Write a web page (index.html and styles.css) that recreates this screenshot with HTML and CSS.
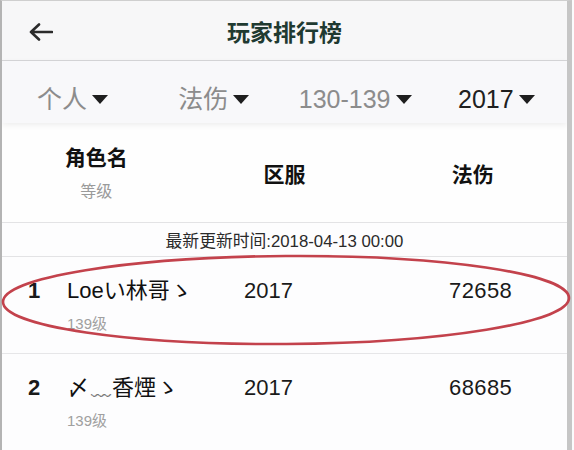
FILE: index.html
```html
<!DOCTYPE html>
<html lang="zh-CN">
<head>
<meta charset="utf-8">
<title>玩家排行榜</title>
<link rel="stylesheet" href="styles.css">
</head>
<body>
<div class="frame">
  <header class="topbar">
    <svg class="back" width="24" height="18" viewBox="0 0 24 18"><path d="M2 9 H23 M10 1.5 L2 9 L10 16.5" fill="none" stroke="#2b2b2b" stroke-width="2.6" stroke-linecap="round" stroke-linejoin="round"/></svg>
    <h1 class="title">玩家排行榜</h1>
  </header>
  <nav class="filters">
    <div class="filter muted">个人<span class="caret"></span></div>
    <div class="filter muted">法伤<span class="caret"></span></div>
    <div class="filter muted">130-139<span class="caret"></span></div>
    <div class="filter active">2017<span class="caret"></span></div>
  </nav>
  <div class="thead">
    <div class="th th-name"><div class="th-main">角色名</div><div class="th-sub">等级</div></div>
    <div class="th"><div class="th-main">区服</div></div>
    <div class="th"><div class="th-main">法伤</div></div>
  </div>
  <div class="updated">最新更新时间:2018-04-13 00:00</div>
  <div class="row">
    <div class="rank">1</div>
    <div class="who"><div class="name">Loeい林哥ゝ</div><div class="level">139级</div></div>
    <div class="server">2017</div>
    <div class="value">72658</div>
  </div>
  <div class="row">
    <div class="rank">2</div>
    <div class="who"><div class="name">〆<span class="wave">﹏</span>香煙ゝ</div><div class="level">139级</div></div>
    <div class="server">2017</div>
    <div class="value">68685</div>
  </div>
</div>
<svg class="mark" width="574" height="450" viewBox="0 0 574 450"><ellipse cx="286" cy="300" rx="283" ry="44" fill="none" stroke="#c3424c" stroke-width="2.6" transform="rotate(-0.4 286 300)"/></svg>
</body>
</html>
```
FILE: styles.css
```css
html, body {
  margin: 0;
  padding: 0;
  background: #fbfbfc;
}
body {
  width: 574px;
  height: 450px;
  overflow: hidden;
  position: relative;
  font-family: "Liberation Sans", "Noto Sans CJK SC", sans-serif;
  color: #1a1a1a;
}
.frame {
  width: 565px;
  height: 449px;
  border-left: 2px solid #b4b4b4;
  border-right: 5px solid #c6c6c6;
  border-top: 1px solid #cfcfcf;
  background: #fdfdfe;
  overflow: hidden;
}
.topbar {
  height: 59px;
  border-bottom: 1px solid #d6d6d8;
  background: #f7f7f8;
  display: flex;
  align-items: center;
  justify-content: center;
  position: relative;
}
.back {
  position: absolute;
  left: 27px;
  top: 22px;
}
.title {
  margin: 0;
  font-size: 23px;
  font-weight: bold;
  color: #1f3a31;
  font-family: "Noto Sans CJK SC", sans-serif;
  line-height: 28px;
  padding-top: 1px;
}
.filters {
  height: 62px;
  background: #f8f8fa;
  display: grid;
  grid-template-columns: repeat(4, 1fr);
  box-shadow: 0 2px 6px rgba(0, 0, 0, 0.07);
  position: relative;
}
.filter {
  display: flex;
  align-items: center;
  justify-content: center;
  gap: 5px;
  font-size: 25px;
  line-height: 30px;
  padding-top: 23px;
  height: 30px;
}
.filter.muted { color: #8c8c8c; }
.filter.active { color: #202020; }
.caret {
  width: 0;
  height: 0;
  border-left: 8px solid transparent;
  border-right: 8px solid transparent;
  border-top: 9px solid #1e1e1e;
  margin-top: 1px;
}
.thead {
  height: 99px;
  display: grid;
  grid-template-columns: repeat(3, 1fr);
  border-bottom: 1px solid #e3e3e5;
  background: #fefefe;
}
.th {
  display: flex;
  flex-direction: column;
  align-items: center;
  justify-content: center;
}
.th-main {
  font-family: "Noto Sans CJK SC", sans-serif;
  font-size: 21px;
  font-weight: bold;
  line-height: 26px;
  color: #111;
}
.th-name .th-main {
  margin-top: -2px;
}
.th-sub {
  font-family: "Noto Sans CJK SC", sans-serif;
  font-size: 16px;
  line-height: 20px;
  color: #9a9a9a;
  margin-top: 11px;
}
.updated {
  height: 33px;
  border-bottom: 1px solid #e3e3e5;
  display: flex;
  align-items: center;
  justify-content: center;
  font-size: 16.8px;
  color: #2a2a2a;
}
.row {
  height: 96px;
  border-bottom: 1px solid #e6e6e8;
  display: grid;
  grid-template-columns: 65px 177px 205px 1fr;
  align-items: start;
}
.rank {
  text-align: center;
  font-size: 22px;
  font-weight: bold;
  line-height: 26px;
  margin-top: 21px;
  padding-right: 1px;
}
.who {
  margin-top: 21px;
}
.name {
  font-size: 22px;
  line-height: 26px;
  color: #111;
  white-space: nowrap;
}
.wave {
  font-size: 20px;
  color: #777;
  margin-left: 2px;
  margin-right: 1px;
}
.level {
  font-size: 15px;
  line-height: 20px;
  color: #a0a0a0;
  margin-top: 10px;
}
.server, .value {
  font-size: 22px;
  line-height: 26px;
  margin-top: 21px;
}
.value {
  letter-spacing: 0.4px;
}
.mark {
  position: absolute;
  left: 0;
  top: 0;
  pointer-events: none;
}
```
